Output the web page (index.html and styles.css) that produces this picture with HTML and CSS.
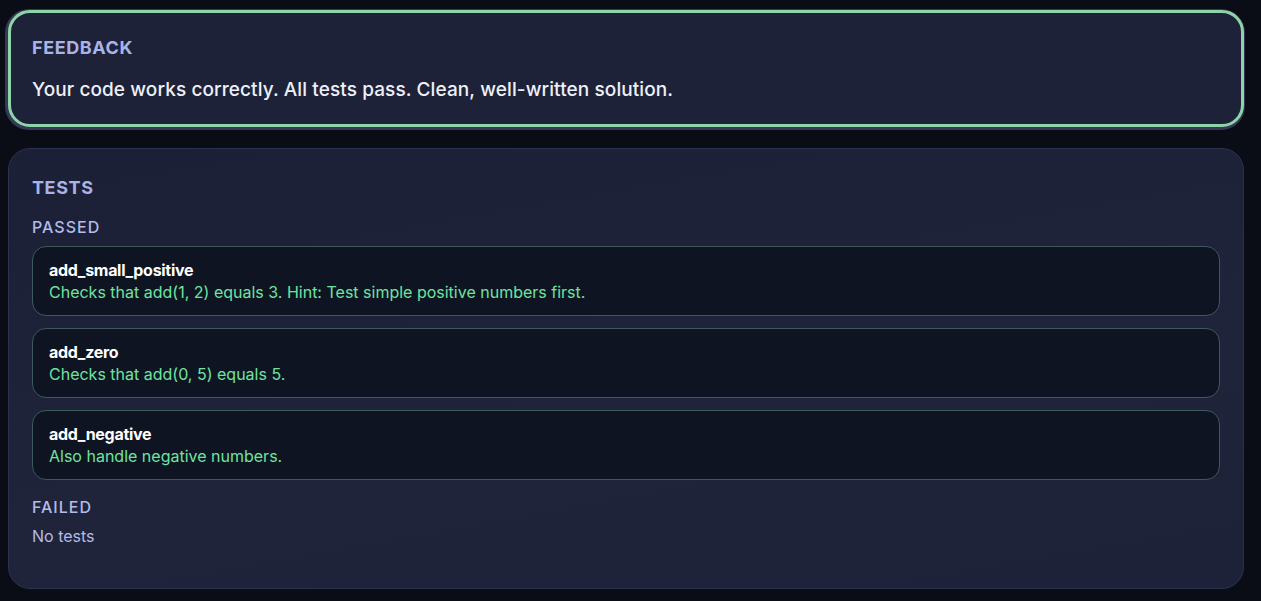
FILE: index.html
```html
<!DOCTYPE html>
<html lang="en">
<head>
    <meta charset="UTF-8">
    <meta name="viewport" content="width=device-width, initial-scale=1.0">
    <title>Submission Result</title>
    <link rel="stylesheet" href="styles.css">
</head>
<body>
    <div class="page">
        <section class="card feedback">
            <h2 class="card-title">FEEDBACK</h2>
            <p class="feedback-text">Your code works correctly. All tests pass. Clean, well-written solution.</p>
        </section>

        <section class="card tests">
            <h2 class="card-title">TESTS</h2>

            <h3 class="group-title">PASSED</h3>
            <div class="test-list">
                <div class="test-item">
                    <div class="test-name">add_small_positive</div>
                    <div class="test-desc">Checks that add(1, 2) equals 3. Hint: Test simple positive numbers first.</div>
                </div>
                <div class="test-item">
                    <div class="test-name">add_zero</div>
                    <div class="test-desc">Checks that add(0, 5) equals 5.</div>
                </div>
                <div class="test-item">
                    <div class="test-name">add_negative</div>
                    <div class="test-desc">Also handle negative numbers.</div>
                </div>
            </div>

            <h3 class="group-title">FAILED</h3>
            <p class="empty">No tests</p>
        </section>
    </div>
</body>
</html>
```

FILE: styles.css
```css
* {
    box-sizing: border-box;
    margin: 0;
    padding: 0;
}

body {
    font-family: 'Inter', 'Noto Sans', sans-serif;
    background-color: #0a0d16;
    color: #eef0f8;
}

.page {
    display: flex;
    flex-direction: column;
    gap: 21px;
    padding: 10px 17px 12px 8px;
}

.card {
    background-color: #1e2239;
    border-radius: 22px;
}

.card-title {
    font-size: 18px;
    line-height: 24px;
    font-weight: 700;
    color: #aab3e6;
    letter-spacing: 0.6px;
}

.feedback {
    border: 3px solid #8fd3a8;
    box-shadow: -1px 1px 0 2px #343a55;
    padding: 23px 21px 21px 21px;
}

.feedback-text {
    margin-top: 17px;
    font-size: 19px;
    line-height: 26px;
    font-weight: 500;
    color: #eef0f8;
    letter-spacing: 0.1px;
}

.tests {
    border: 1px solid #2c3250;
    background: linear-gradient(170deg, #1c2036 0%, #1f243b 60%, #1e2239 100%);
    padding: 27px 23px 41px 23px;
}

.group-title {
    margin-top: 17px;
    font-size: 16px;
    line-height: 20px;
    font-weight: 500;
    letter-spacing: 1px;
    color: #b3bbe6;
}

.test-list {
    display: flex;
    flex-direction: column;
    gap: 12px;
    margin-top: 9px;
}

.test-item {
    background-color: #0f1423;
    border: 1px solid #3c5a5d;
    border-radius: 14px;
    padding: 13px 16px 12px 16px;
}

.test-name {
    font-size: 16px;
    line-height: 21px;
    font-weight: 700;
    color: #ffffff;
    letter-spacing: -0.3px;
}

.test-desc {
    font-size: 16px;
    line-height: 22px;
    color: #6ee49f;
}

.empty {
    margin-top: 8px;
    font-size: 16px;
    line-height: 22px;
    color: #b3bbe6;
}
```
